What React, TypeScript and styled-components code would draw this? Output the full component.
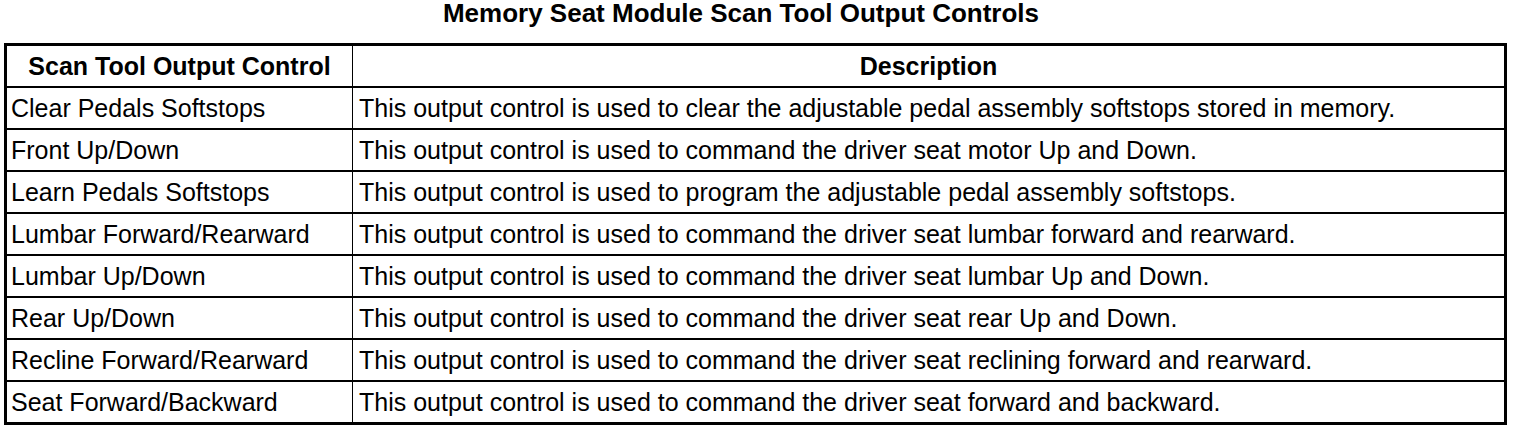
import styled, { createGlobalStyle } from "styled-components";

const GlobalStyle = createGlobalStyle`
    body {
        margin: 0;
        background: #ffffff;
        font-family: "Liberation Sans", Arial, sans-serif;
        color: #000000;
    }
`;

const Page = styled.div`
    width: 1520px;
    height: 432px;
    padding: 0 13px 0 4px;
    box-sizing: border-box;
`;

const Title = styled.div`
    height: 43px;
    padding-right: 29px;
    font-size: 26px;
    line-height: 26px;
    font-weight: bold;
    text-align: center;
`;

const Table = styled.table`
    width: 100%;
    border-collapse: collapse;
    border: 3px solid #000;
    table-layout: fixed;
`;

const HeadCell = styled.th<{ $width?: number }>`
    width: ${(p) => (p.$width ? `${p.$width}px` : "auto")};
    height: 40px;
    padding: 0;
    border-left: 1px solid #000;
    border-bottom: 2px solid #000;
    font-size: 25px;
    font-weight: bold;
    text-align: center;
`;

const Cell = styled.td<{ $indent: number }>`
    height: 40px;
    padding: 0 0 0 ${(p) => p.$indent}px;
    border-left: 1px solid #000;
    border-bottom: 2px solid #000;
    font-size: 25px;
    white-space: nowrap;
`;

const rows: [string, string][] = [
    ["Clear Pedals Softstops", "This output control is used to clear the adjustable pedal assembly softstops stored in memory."],
    ["Front Up/Down", "This output control is used to command the driver seat motor Up and Down."],
    ["Learn Pedals Softstops", "This output control is used to program the adjustable pedal assembly softstops."],
    ["Lumbar Forward/Rearward", "This output control is used to command the driver seat lumbar forward and rearward."],
    ["Lumbar Up/Down", "This output control is used to command the driver seat lumbar Up and Down."],
    ["Rear Up/Down", "This output control is used to command the driver seat rear Up and Down."],
    ["Recline Forward/Rearward", "This output control is used to command the driver seat reclining forward and rearward."],
    ["Seat Forward/Backward", "This output control is used to command the driver seat forward and backward."],
];

function App() {
    return (
        <Page>
            <GlobalStyle />
            <Title>Memory Seat Module Scan Tool Output Controls</Title>
            <Table>
                <thead>
                    <tr>
                        <HeadCell $width={345}>Scan Tool Output Control</HeadCell>
                        <HeadCell>Description</HeadCell>
                    </tr>
                </thead>
                <tbody>
                    {rows.map(([control, description]) => (
                        <tr key={control}>
                            <Cell $indent={4}>{control}</Cell>
                            <Cell $indent={6}>{description}</Cell>
                        </tr>
                    ))}
                </tbody>
            </Table>
        </Page>
    );
}

export default App;
